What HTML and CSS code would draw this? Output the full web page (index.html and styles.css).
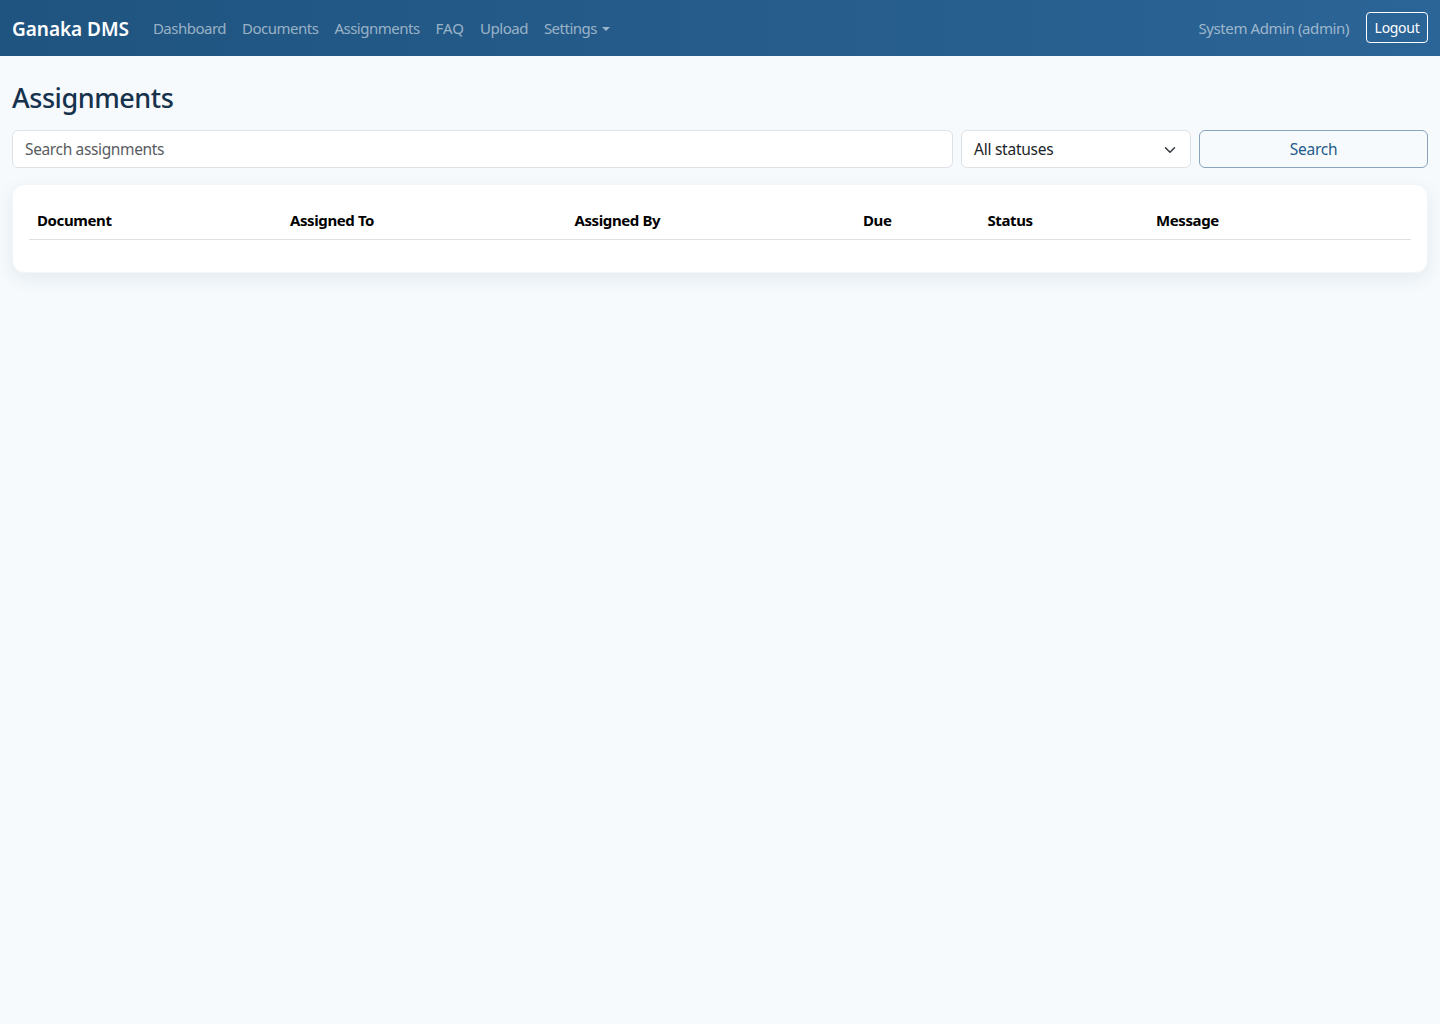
FILE: index.html
```html
<!DOCTYPE html>
<html lang="en">
<head>
<meta charset="utf-8">
<title>Assignments - Ganaka DMS</title>
<link rel="stylesheet" href="styles.css">
</head>
<body>
<nav class="navbar">
  <a class="brand" href="#">Ganaka DMS</a>
  <ul class="nav-links">
    <li><a href="#">Dashboard</a></li>
    <li><a href="#">Documents</a></li>
    <li><a href="#">Assignments</a></li>
    <li><a href="#" class="faq">FAQ</a></li>
    <li><a href="#">Upload</a></li>
    <li><a href="#" class="dropdown">Settings</a></li>
  </ul>
  <div class="nav-user">
    <span class="user-name">System Admin (admin)</span>
    <button class="logout" type="button">Logout</button>
  </div>
</nav>
<main class="page">
  <h1 class="title">Assignments</h1>
  <form class="filters">
    <input class="field search-input" type="text" placeholder="Search assignments">
    <div class="field status-select">
      <span class="status-label">All statuses</span>
      <svg class="chevron" viewBox="0 0 16 16" width="16" height="16" aria-hidden="true"><path d="m2 5 6 6 6-6" fill="none" stroke="#343a40" stroke-width="2" stroke-linecap="round" stroke-linejoin="round"/></svg>
    </div>
    <button class="search-btn" type="button">Search</button>
  </form>
  <section class="card">
    <table class="table">
      <colgroup>
        <col class="c1"><col class="c2"><col class="c3"><col class="c4"><col class="c5"><col class="c6">
      </colgroup>
      <thead>
        <tr><th>Document</th><th>Assigned To</th><th>Assigned By</th><th>Due</th><th>Status</th><th>Message</th></tr>
      </thead>
      <tbody></tbody>
    </table>
  </section>
</main>
</body>
</html>
```
FILE: styles.css
```css
* { box-sizing: border-box; }
html, body { margin: 0; min-height: 100%; }
body {
  min-height: 1024px;
  background: #f6fafd;
  color: #212529;
  font-family: "Noto Sans", "Open Sans", sans-serif;
  font-size: 16px;
  line-height: 1.5;
}
a { text-decoration: none; }

.navbar {
  display: flex;
  align-items: center;
  height: 56px;
  padding: 0 12px;
  background: linear-gradient(90deg, #1f5480, #2b6496);
}
.brand {
  margin: 2px 16px 0 0;
  color: #fff;
  font-size: 19px;
  font-weight: 600;
  letter-spacing: -0.05px;
  white-space: nowrap;
}
.nav-links {
  display: flex;
  margin: 0;
  padding: 0;
  list-style: none;
}
.nav-links a {
  display: block;
  padding: 8px;
  color: rgba(255, 255, 255, 0.55);
  font-size: 15px;
  letter-spacing: -0.5px;
  white-space: nowrap;
}
.nav-links .faq { letter-spacing: 0; }
.dropdown::after {
  content: "";
  display: inline-block;
  margin-left: 5px;
  vertical-align: 3px;
  border-top: 4.8px solid;
  border-right: 4.1px solid transparent;
  border-left: 4.1px solid transparent;
}
.nav-user {
  display: flex;
  align-items: center;
  gap: 17px;
  margin-left: auto;
}
.user-name {
  color: rgba(255, 255, 255, 0.55);
  font-size: 15px;
  letter-spacing: -0.4px;
  white-space: nowrap;
}
.logout {
  width: 62px;
  height: 31px;
  margin-bottom: 1px;
  padding: 0;
  border: 1px solid #fff;
  border-radius: 4px;
  background: transparent;
  color: #fff;
  font: inherit;
  font-size: 14px;
  letter-spacing: -0.3px;
}

.page { padding: 24px 12px 0; }
.title {
  margin: 0 0 14px;
  color: #17324d;
  font-size: 27px;
  font-weight: 500;
  line-height: 36px;
  letter-spacing: -0.45px;
}
.filters {
  display: grid;
  grid-template-columns: 941px 230px 229px;
  gap: 8px;
  margin-bottom: 16px;
}
.field {
  height: 38px;
  padding: 0 12px;
  border: 1px solid #dee2e6;
  border-radius: 6px;
  background: #fff;
  color: #212529;
  font: inherit;
  font-size: 15.5px;
  letter-spacing: -0.25px;
}
.search-input { letter-spacing: -0.36px; }
.search-input::placeholder { color: #595c5f; opacity: 1; }
.status-select {
  display: flex;
  align-items: center;
  justify-content: space-between;
}
.status-label { margin-top: 2px; }
.chevron { width: 12px; height: 12px; margin: 1px 2px 0 0; }
.search-btn {
  height: 38px;
  padding: 2px 0 0;
  border: 1px solid #8aa4bf;
  border-radius: 6px;
  background: transparent;
  color: #245a8a;
  font: inherit;
  font-size: 15.5px;
  letter-spacing: -0.25px;
}
.card {
  height: 89px;
  padding: 16px;
  border: 1px solid #f3f6f9;
  border-radius: 12px;
  background: #fff;
  box-shadow: 0 6px 18px rgba(20, 50, 80, 0.08);
}
.table {
  width: 100%;
  border-collapse: collapse;
  table-layout: fixed;
}
.c1 { width: 253px; }
.c2 { width: 284.5px; }
.c3 { width: 288.5px; }
.c4 { width: 124.5px; }
.c5 { width: 168.5px; }
.c6 { width: 263px; }
th {
  height: 38px;
  padding: 8px 8px 7px;
  border-bottom: 1px solid #dee2e6;
  color: #000;
  font-size: 15px;
  font-weight: 700;
  letter-spacing: -0.4px;
  line-height: 22px;
  text-align: left;
  white-space: nowrap;
}
```
